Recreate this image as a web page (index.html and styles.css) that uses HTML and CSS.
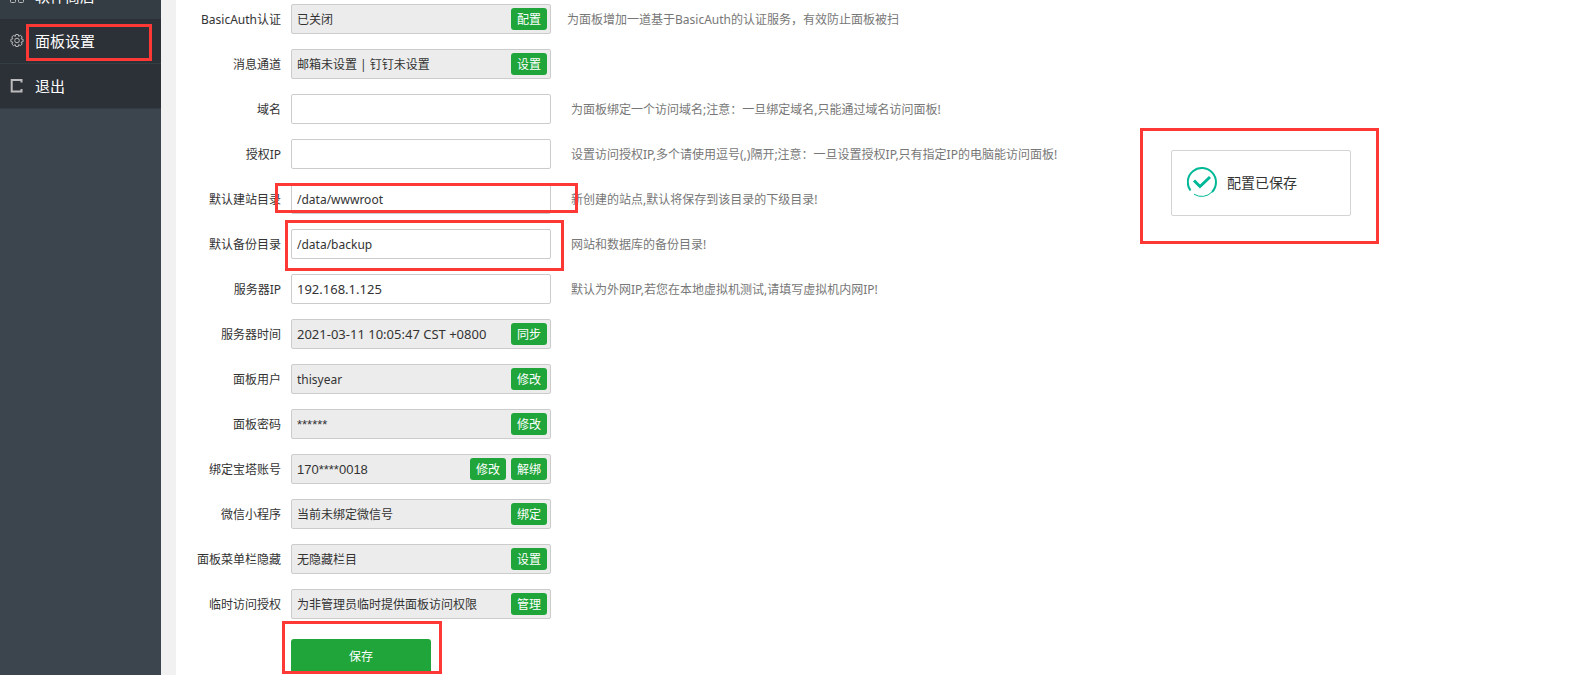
FILE: index.html
```html
<!DOCTYPE html>
<html lang="zh-CN">
<head>
    <meta charset="UTF-8">
    <meta name="viewport" content="width=device-width, initial-scale=1.0">
    <title>面板设置</title>
    <link rel="stylesheet" href="styles.css">
</head>
<body>
    <nav class="sidebar">
        <a class="menu-item" href="#">
            <svg class="menu-icon" viewBox="0 0 16 16"><rect x="2.500" y="2.500" width="5" height="5" rx="1"/><rect x="10.500" y="2.500" width="5" height="5" rx="1"/><rect x="2.500" y="10.500" width="5" height="5" rx="1"/><rect x="10.500" y="10.500" width="5" height="5" rx="1"/></svg>
            <span>软件商店</span>
        </a>
        <a class="menu-item active" href="#">
            <svg class="menu-icon" viewBox="0 0 16 16"><path d="M7.800 2.500h2.400l.5 1.900 1.800-1.100 1.700 1.700-1.100 1.800 2 .5v2.400l-2 .5 1.100 1.800-1.700 1.700-1.800-1.100-.5 1.900H7.800l-.5-1.900-1.800 1.100L3.800 12l1.100-1.800-2-.5V7.300l2-.5L3.800 5l1.700-1.700 1.800 1.100z"/><circle cx="9" cy="8.500" r="2.300"/></svg>
            <span>面板设置</span>
            <span class="mark mark-menu"></span>
        </a>
        <a class="menu-item active" href="#">
            <svg class="menu-icon bold" viewBox="0 0 16 16"><path d="M13.500 5.500V3H3.700v11.500h9.800V12"/></svg>
            <span>退出</span>
        </a>
    </nav>

    <main class="content">
        <form class="settings" action="#">
            <div class="line">
                <label class="name" for="basic_auth">BasicAuth认证</label>
                <div class="field">
                    <input id="basic_auth" class="disable" type="text" value="已关闭" readonly>
                    <div class="btns"><button type="button">配置</button></div>
                </div>
                <span class="tip near">为面板增加一道基于BasicAuth的认证服务，有效防止面板被扫</span>
            </div>
            <div class="line">
                <label class="name" for="channel">消息通道</label>
                <div class="field">
                    <input id="channel" class="disable" type="text" value="邮箱未设置 | 钉钉未设置" readonly>
                    <div class="btns"><button type="button">设置</button></div>
                </div>
            </div>
            <div class="line">
                <label class="name" for="domain">域名</label>
                <div class="field"><input id="domain" type="text"></div>
                <span class="tip">为面板绑定一个访问域名;注意：一旦绑定域名,只能通过域名访问面板!</span>
            </div>
            <div class="line">
                <label class="name" for="limitip">授权IP</label>
                <div class="field"><input id="limitip" type="text"></div>
                <span class="tip">设置访问授权IP,多个请使用逗号(,)隔开;注意：一旦设置授权IP,只有指定IP的电脑能访问面板!</span>
            </div>
            <div class="line">
                <label class="name" for="sites_path">默认建站目录</label>
                <div class="field">
                    <input id="sites_path" type="text" value="/data/wwwroot">
                    <span class="mark mark-site"></span>
                </div>
                <span class="tip">新创建的站点,默认将保存到该目录的下级目录!</span>
            </div>
            <div class="line">
                <label class="name" for="backup_path">默认备份目录</label>
                <div class="field">
                    <input id="backup_path" type="text" value="/data/backup">
                    <span class="mark mark-backup"></span>
                </div>
                <span class="tip">网站和数据库的备份目录!</span>
            </div>
            <div class="line">
                <label class="name" for="address">服务器IP</label>
                <div class="field"><input id="address" class="digits" type="text" value="192.168.1.125"></div>
                <span class="tip">默认为外网IP,若您在本地虚拟机测试,请填写虚拟机内网IP!</span>
            </div>
            <div class="line">
                <label class="name" for="systemdate">服务器时间</label>
                <div class="field">
                    <input id="systemdate" class="disable digits" type="text" value="2021-03-11 10:05:47 CST +0800" readonly>
                    <div class="btns"><button type="button">同步</button></div>
                </div>
            </div>
            <div class="line">
                <label class="name" for="username">面板用户</label>
                <div class="field">
                    <input id="username" class="disable" type="text" value="thisyear" readonly>
                    <div class="btns"><button type="button">修改</button></div>
                </div>
            </div>
            <div class="line">
                <label class="name" for="password">面板密码</label>
                <div class="field">
                    <input id="password" class="disable account" type="text" value="******" readonly>
                    <div class="btns"><button type="button">修改</button></div>
                </div>
            </div>
            <div class="line">
                <label class="name" for="bt_user">绑定宝塔账号</label>
                <div class="field">
                    <input id="bt_user" class="disable account" type="text" value="170****0018" readonly>
                    <div class="btns"><button type="button">修改</button><button type="button">解绑</button></div>
                </div>
            </div>
            <div class="line">
                <label class="name" for="wechat">微信小程序</label>
                <div class="field">
                    <input id="wechat" class="disable" type="text" value="当前未绑定微信号" readonly>
                    <div class="btns"><button type="button">绑定</button></div>
                </div>
            </div>
            <div class="line">
                <label class="name" for="hide_menu">面板菜单栏隐藏</label>
                <div class="field">
                    <input id="hide_menu" class="disable" type="text" value="无隐藏栏目" readonly>
                    <div class="btns"><button type="button">设置</button></div>
                </div>
            </div>
            <div class="line">
                <label class="name" for="temp_login">临时访问授权</label>
                <div class="field">
                    <input id="temp_login" class="disable" type="text" value="为非管理员临时提供面板访问权限" readonly>
                    <div class="btns"><button type="button">管理</button></div>
                </div>
            </div>
            <div class="save-line">
                <button class="save" type="submit">保存</button>
                <span class="mark mark-save"></span>
            </div>
        </form>
    </main>

    <div class="toast" role="status">
        <svg class="toast-icon" viewBox="0 0 30 30">
            <path class="ring" d="M7 27.200A14.200 14.200 0 0 0 25 25"/>
            <path class="ring thick" d="M25 25A14.100 14.100 0 1 0 3.500 23.500"/>
            <path class="tick" d="M7 13.500l6 6L23 10"/>
        </svg>
        <span>配置已保存</span>
        <span class="mark mark-toast"></span>
    </div>
</body>
</html>
```
FILE: styles.css
```css
*{
    box-sizing: border-box;
}

body{
    margin: 0;
    display: flex;
    min-height: 100vh;
    overflow: hidden;
    position: relative;
    background-color: #f1f1f1;
    color: #333;
    font-family: "Noto Sans", "Noto Sans CJK SC", sans-serif;
    font-size: 12px;
}

input, button{
    font-family: inherit;
    font-size: 12px;
}

/* left menu, scrolled a little */
.sidebar{
    flex: none;
    width: 161px;
    margin-top: -26px;
    background-color: #3c444d;
}

.menu-item{
    position: relative;
    display: flex;
    align-items: center;
    gap: 11px;
    height: 45px;
    padding: 0 0 2px 8px;
    border-bottom: 1px solid #353d44;
    background-color: #353d44;
    color: #fff;
    font-size: 15px;
    text-decoration: none;
}

.menu-item.active{
    background-color: #2c3138;
}

.menu-icon{
    width: 16px;
    height: 16px;
    fill: none;
    stroke: #bbb;
    stroke-width: 1;
}

.menu-icon.bold{
    stroke-width: 2;
}

/* settings form */
.content{
    flex: 1;
    margin-left: 15px;
    padding-top: 4px;
    background-color: #fff;
}

.line{
    display: flex;
    align-items: center;
    margin-bottom: 15px;
}

.name{
    width: 105px;
    margin-right: 10px;
    text-align: right;
}

.field{
    position: relative;
    width: 260px;
}

.field input{
    display: block;
    width: 100%;
    height: 30px;
    padding: 0 5px;
    border: 1px solid #ccc;
    border-radius: 2px;
    background-color: #fff;
    color: #333;
    outline: none;
}

.field .disable{
    background-color: #ececec;
}

.field .digits{
    font-size: 13px;
}

.field .account{
    font-family: "Liberation Sans", sans-serif;
    font-size: 13px;
}

/* buttons lie over the right end of the text box */
.btns{
    position: absolute;
    top: 4px;
    right: 4px;
    display: flex;
    gap: 5px;
}

.btns button{
    width: 36px;
    height: 22px;
    padding: 0;
    border: none;
    border-radius: 3px;
    background-color: #20a53a;
    color: #fff;
}

.tip{
    margin-left: 20px;
    color: #777;
}

.tip.near{
    margin-left: 16px;
}

.save-line{
    position: relative;
    width: 140px;
    margin: 20px 0 0 115px;
}

.save{
    display: block;
    width: 100%;
    height: 35px;
    padding: 0 0 2px;
    border: none;
    border-radius: 3px;
    background-color: #20a53a;
    color: #fff;
}

/* saved message */
.toast{
    position: absolute;
    top: 150px;
    right: 218px;
    display: flex;
    align-items: center;
    gap: 10px;
    width: 180px;
    height: 66px;
    padding: 0 0 2px 15px;
    border: 1px solid #d3d4d3;
    border-radius: 2px;
    background-color: #fff;
    font-size: 14px;
}

.toast-icon{
    width: 30px;
    height: 30px;
    fill: none;
    stroke: #00b897;
}

.ring{
    stroke-width: 1;
}

.ring.thick{
    stroke-width: 2;
}

.tick{
    stroke-width: 3;
}

/* red boxes */
.mark{
    position: absolute;
    border: 3px solid #fd3835;
    pointer-events: none;
}

.mark-menu{
    top: 5px;
    left: 26px;
    width: 126px;
    height: 37px;
}

.mark-site{
    top: -1px;
    left: -16px;
    width: 303px;
    height: 30px;
}

.mark-backup{
    top: -9px;
    left: -6px;
    width: 279px;
    height: 51px;
}

.mark-save{
    top: -18px;
    left: -9px;
    width: 160px;
    height: 53px;
}

.mark-toast{
    top: -23px;
    left: -32px;
    width: 239px;
    height: 116px;
}
```
